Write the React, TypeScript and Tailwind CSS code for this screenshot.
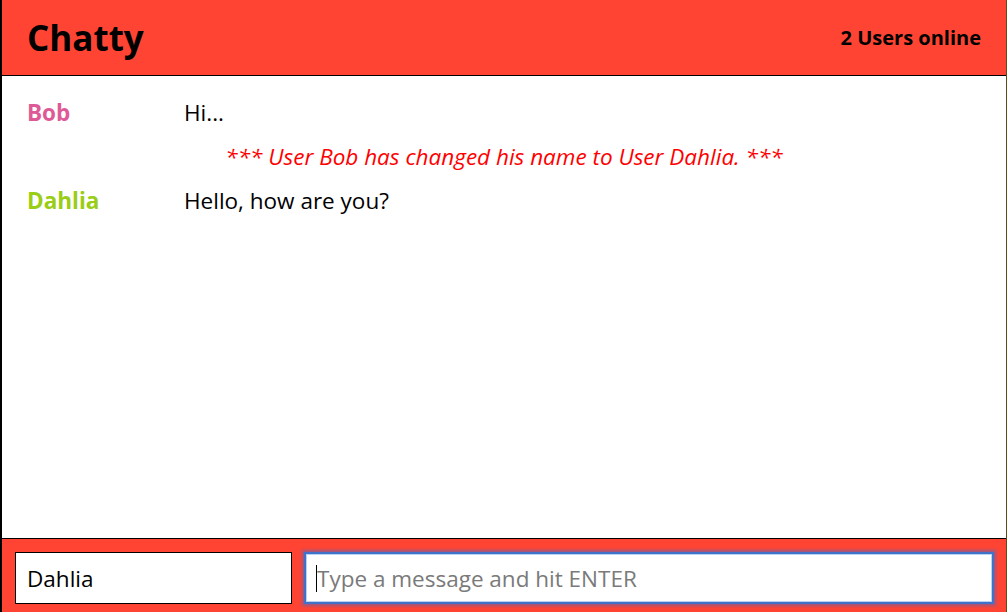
import { useState } from "react"

type Message =
  | { kind: "chat"; user: string; color: string; text: string }
  | { kind: "system"; text: string }

const messages: Message[] = [
  { kind: "chat", user: "Bob", color: "text-[#de5a97]", text: "Hi..." },
  { kind: "system", text: "*** User Bob has changed his name to User Dahlia. ***" },
  { kind: "chat", user: "Dahlia", color: "text-[#9acd16]", text: "Hello, how are you?" },
]

export default function App() {
  const [name, setName] = useState("Dahlia")
  const [draft, setDraft] = useState("")

  return (
    <div className="flex h-[612px] w-[1007px] flex-col overflow-hidden border-l-2 border-r border-l-black border-r-[#5a4a1c] bg-white font-['Open_Sans',sans-serif] text-black">
      {/* Header */}
      <header className="flex h-[76px] shrink-0 items-center justify-between border-b border-black bg-[#ff4433] pl-[25px] pr-[25px]">
        <h1 className="text-[35px] font-bold leading-none">Chatty</h1>
        <span className="text-[20px] font-bold">2 Users online</span>
      </header>

      {/* Messages */}
      <main className="flex-1 pt-[15px]">
        {messages.map((m, i) =>
          m.kind === "chat" ? (
            <div key={i} className="flex h-[44px] items-center pl-[25px] text-[22.5px]">
              <span className={`w-[157px] shrink-0 font-bold ${m.color}`}>{m.user}</span>
              <span>{m.text}</span>
            </div>
          ) : (
            <div key={i} className="flex h-[44px] items-center justify-center text-[22.5px] italic text-[#ff0000]">
              {m.text}
            </div>
          )
        )}
      </main>

      {/* Footer */}
      <footer className="flex h-[74px] shrink-0 gap-[12px] border-t border-black bg-[#ff4433] pl-[13px] pr-[12px] pt-[13px]">
        <input
          value={name}
          onChange={(e) => setName(e.target.value)}
          className="h-[52px] w-[277px] shrink-0 border border-black bg-white px-[11px] text-[22.5px] outline-none"
        />
        <div className="relative flex-1">
          <input
            value={draft}
            onChange={(e) => setDraft(e.target.value)}
            placeholder="Type a message and hit ENTER"
            className="h-[52px] w-full border-2 border-[#3f72c8] bg-white px-[11px] text-[22.5px] shadow-[0_0_3px_2px_rgba(70,110,200,0.55),inset_0_0_0_1px_#b9d4f3] outline-none placeholder:text-[#7a7a7a]"
          />
          <span className="absolute left-[12px] top-[13px] h-[27px] w-px bg-black" />
        </div>
      </footer>
    </div>
  )
}
